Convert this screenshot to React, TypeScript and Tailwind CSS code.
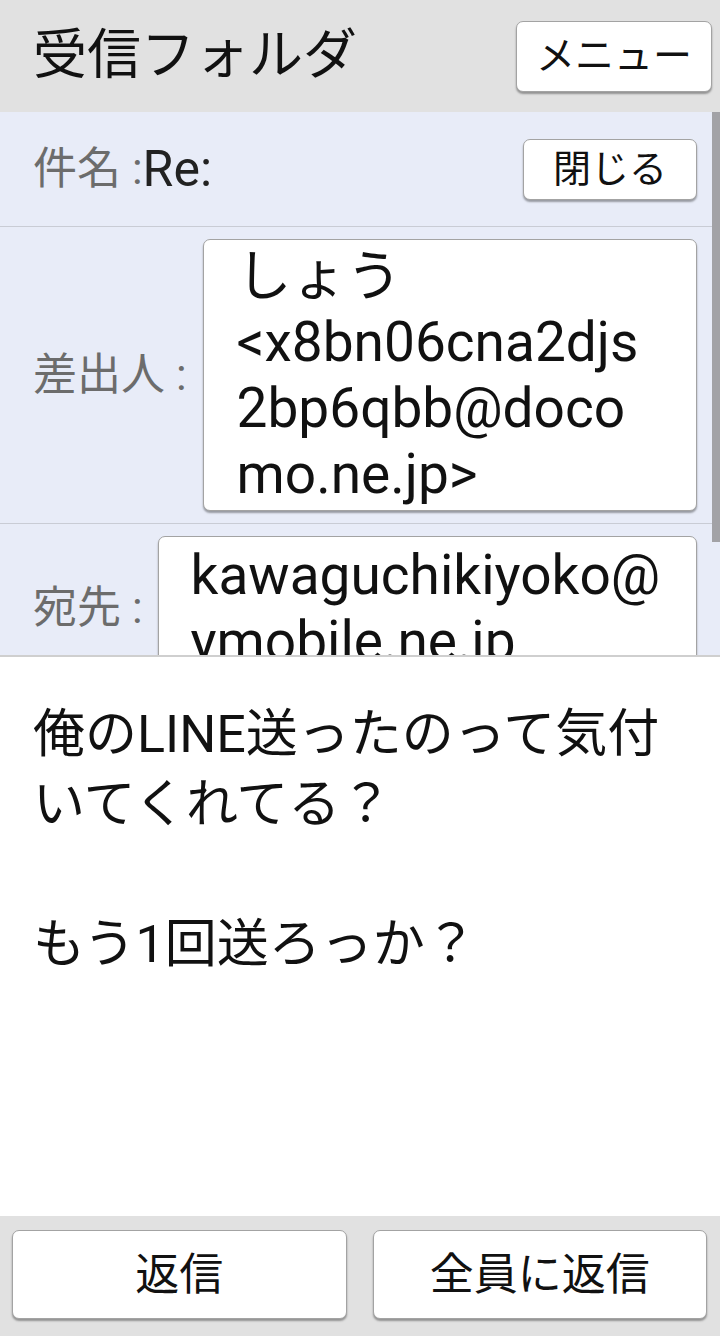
import React from 'react';

const raised =
  'bg-white rounded-[7px] border border-[#a3a3a3] shadow-[0_2px_2px_rgba(0,0,0,0.35)] text-[#111]';

function Field({ label, children }: { label: string; children: React.ReactNode }) {
  return (
    <div className="flex items-center border-b border-[#c9ccd5] pl-[33px] pr-[23px] py-[12px]">
      <div className="shrink-0 text-[44px] leading-none text-[#6c6c6c] whitespace-nowrap">{label}</div>
      {children}
    </div>
  );
}

export default function App() {
  return (
    <div className="flex h-[1336px] w-[720px] flex-col overflow-hidden bg-white [font-family:Roboto,'Noto_Sans_CJK_JP',sans-serif]">
      {/* header */}
      <div className="flex h-[112px] shrink-0 items-center justify-between bg-[#e1e1e1] pl-[33px] pr-[8px]">
        <div className="text-[54px] leading-none text-[#111]">受信フォルダ</div>
        <button className={`${raised} h-[71px] w-[196px] text-[39px] leading-none`}>メニュー</button>
      </div>

      {/* mail header fields */}
      <div className="relative h-[545px] shrink-0 overflow-hidden border-b-2 border-[#cfcfcf] bg-[#e8ecf8]">
        <div className="flex h-[115px] items-center justify-between border-b border-[#c9ccd5] pl-[33px] pr-[23px]">
          <div className="flex items-center whitespace-nowrap">
            <span className="text-[44px] leading-none text-[#6c6c6c]">件名 :</span>
            <span className="text-[50px] leading-none text-[#222]">Re:</span>
          </div>
          <button className={`${raised} h-[61px] w-[174px] text-[38px] leading-none`}>閉じる</button>
        </div>

        <Field label="差出人 :">
          <div className={`ml-[16px] flex-1 ${raised} py-[3px] pl-[33px] text-[55px] leading-[66px]`}>
            <div className="whitespace-nowrap">しょう</div>
            <div className="whitespace-nowrap">&lt;x8bn06cna2djs</div>
            <div className="whitespace-nowrap">2bp6qbb@doco</div>
            <div className="whitespace-nowrap">mo.ne.jp&gt;</div>
          </div>
        </Field>

        <Field label="宛先 :">
          <div className={`ml-[15px] flex-1 ${raised} py-[5px] pl-[32px] text-[55px] leading-[66px]`}>
            <div className="whitespace-nowrap">kawaguchikiyoko@</div>
            <div className="whitespace-nowrap">ymobile.ne.jp</div>
          </div>
        </Field>

        {/* scroll indicator */}
        <div className="absolute right-0 top-0 h-[430px] w-[8px] bg-[#a2a2a6]" />
      </div>

      {/* body */}
      <div className="flex-1 px-[33px] pt-[43px] text-[52px] leading-[70px] text-[#111]">
        <p>俺のLINE送ったのって気付いてくれてる？</p>
        <p>&nbsp;</p>
        <p>もう1回送ろっか？</p>
      </div>

      {/* footer */}
      <div className="flex h-[120px] shrink-0 gap-[26px] bg-[#e1e1e1] pb-[17px] pl-[12px] pr-[13px] pt-[14px]">
        <button className={`${raised} flex-1 text-[44px] leading-none`}>返信</button>
        <button className={`${raised} flex-1 text-[44px] leading-none`}>全員に返信</button>
      </div>
    </div>
  );
}
